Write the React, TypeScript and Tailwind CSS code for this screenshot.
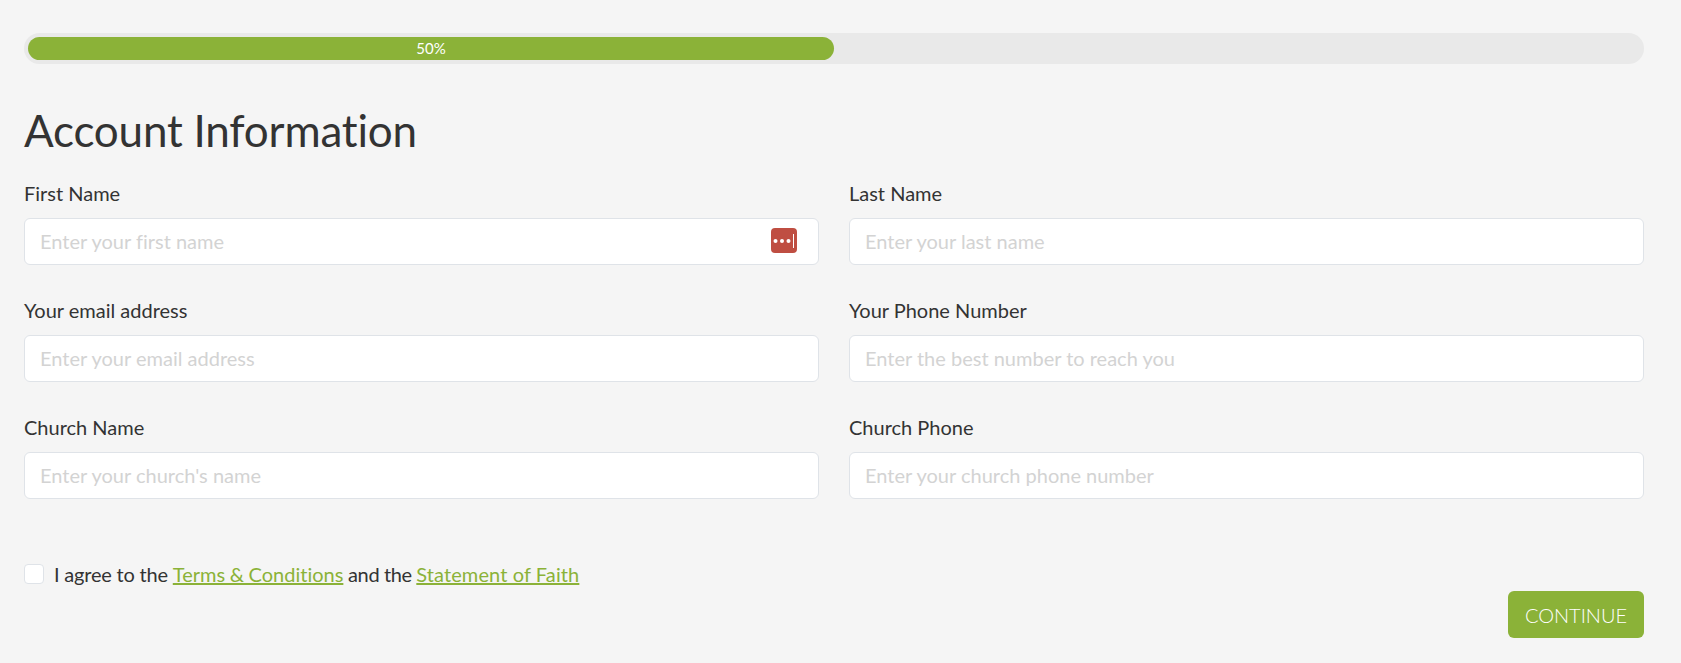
import React from "react";

const fields = [
    { id: "first", label: "First Name", placeholder: "Enter your first name", icon: true },
    { id: "last", label: "Last Name", placeholder: "Enter your last name" },
    { id: "email", label: "Your email address", placeholder: "Enter your email address" },
    { id: "phone", label: "Your Phone Number", placeholder: "Enter the best number to reach you" },
    { id: "church", label: "Church Name", placeholder: "Enter your church's name" },
    { id: "churchPhone", label: "Church Phone", placeholder: "Enter your church phone number" },
];

function PasswordIcon() {
    return (
        <svg className="absolute right-[22px] top-[10px]" width="26" height="25" viewBox="0 0 26 25">
            <rect width="26" height="25" rx="4" fill="#bf4e42" />
            <circle cx="4.5" cy="13" r="2" fill="#fff" />
            <circle cx="11" cy="13" r="2" fill="#fff" />
            <circle cx="17.5" cy="13" r="2" fill="#fff" />
            <rect x="22" y="6" width="1" height="14" fill="#fff" />
        </svg>
    );
}

export default function App() {
    return (
        <div className="min-h-screen bg-[#f5f5f5] pl-6 pr-[37px] pt-[33px] text-[#333] font-['Lato',sans-serif] [font-variant-ligatures:none]">
            <div className="h-[31px] rounded-full bg-[#e9e9e9] p-1">
                <div className="flex h-[23px] w-1/2 items-center justify-center rounded-full bg-[#8bb238] text-[15px] text-white">
                    50%
                </div>
            </div>

            <h1 className="mt-[39px] text-[44px] leading-[54px] font-normal tracking-[-0.2px]">Account Information</h1>

            <div className="mt-[22px] grid grid-cols-2 gap-x-[30px] gap-y-[31px]">
                {fields.map((f) => (
                    <div key={f.id}>
                        <label htmlFor={f.id} className="block text-[20px] leading-[28px]">
                            {f.label}
                        </label>
                        <div className="relative mt-[11px]">
                            <input
                                id={f.id}
                                type="text"
                                placeholder={f.placeholder}
                                className="h-[47px] w-full rounded-md border border-[#dfe3e8] bg-white px-[15px] pb-[2px] text-[20px] outline-none placeholder:text-[#d3d3d3]"
                            />
                            {f.icon && <PasswordIcon />}
                        </div>
                    </div>
                ))}
            </div>

            <div className="mt-[60px] flex items-center">
                <input
                    type="checkbox"
                    className="h-5 w-5 appearance-none rounded-[4px] border border-[#dfe3e8] bg-white"
                />
                <span className="ml-[10px] text-[20px] leading-[30px] tracking-[-0.2px]">
                    I agree to the{" "}
                    <a href="#" className="text-[#8bb238] underline tracking-normal [word-spacing:-0.5px]">
                        Terms &amp; Conditions
                    </a>
                    <span className="tracking-[-0.4px]"> and the </span>
                    <a href="#" className="text-[#8bb238] underline tracking-[0.1px]">
                        Statement of Faith
                    </a>
                </span>
            </div>

            <div className="mt-[2px] flex justify-end">
                <button className="h-[47px] w-[136px] rounded-md bg-[#8bb238] text-[20px] font-light text-white">
                    CONTINUE
                </button>
            </div>
        </div>
    );
}
